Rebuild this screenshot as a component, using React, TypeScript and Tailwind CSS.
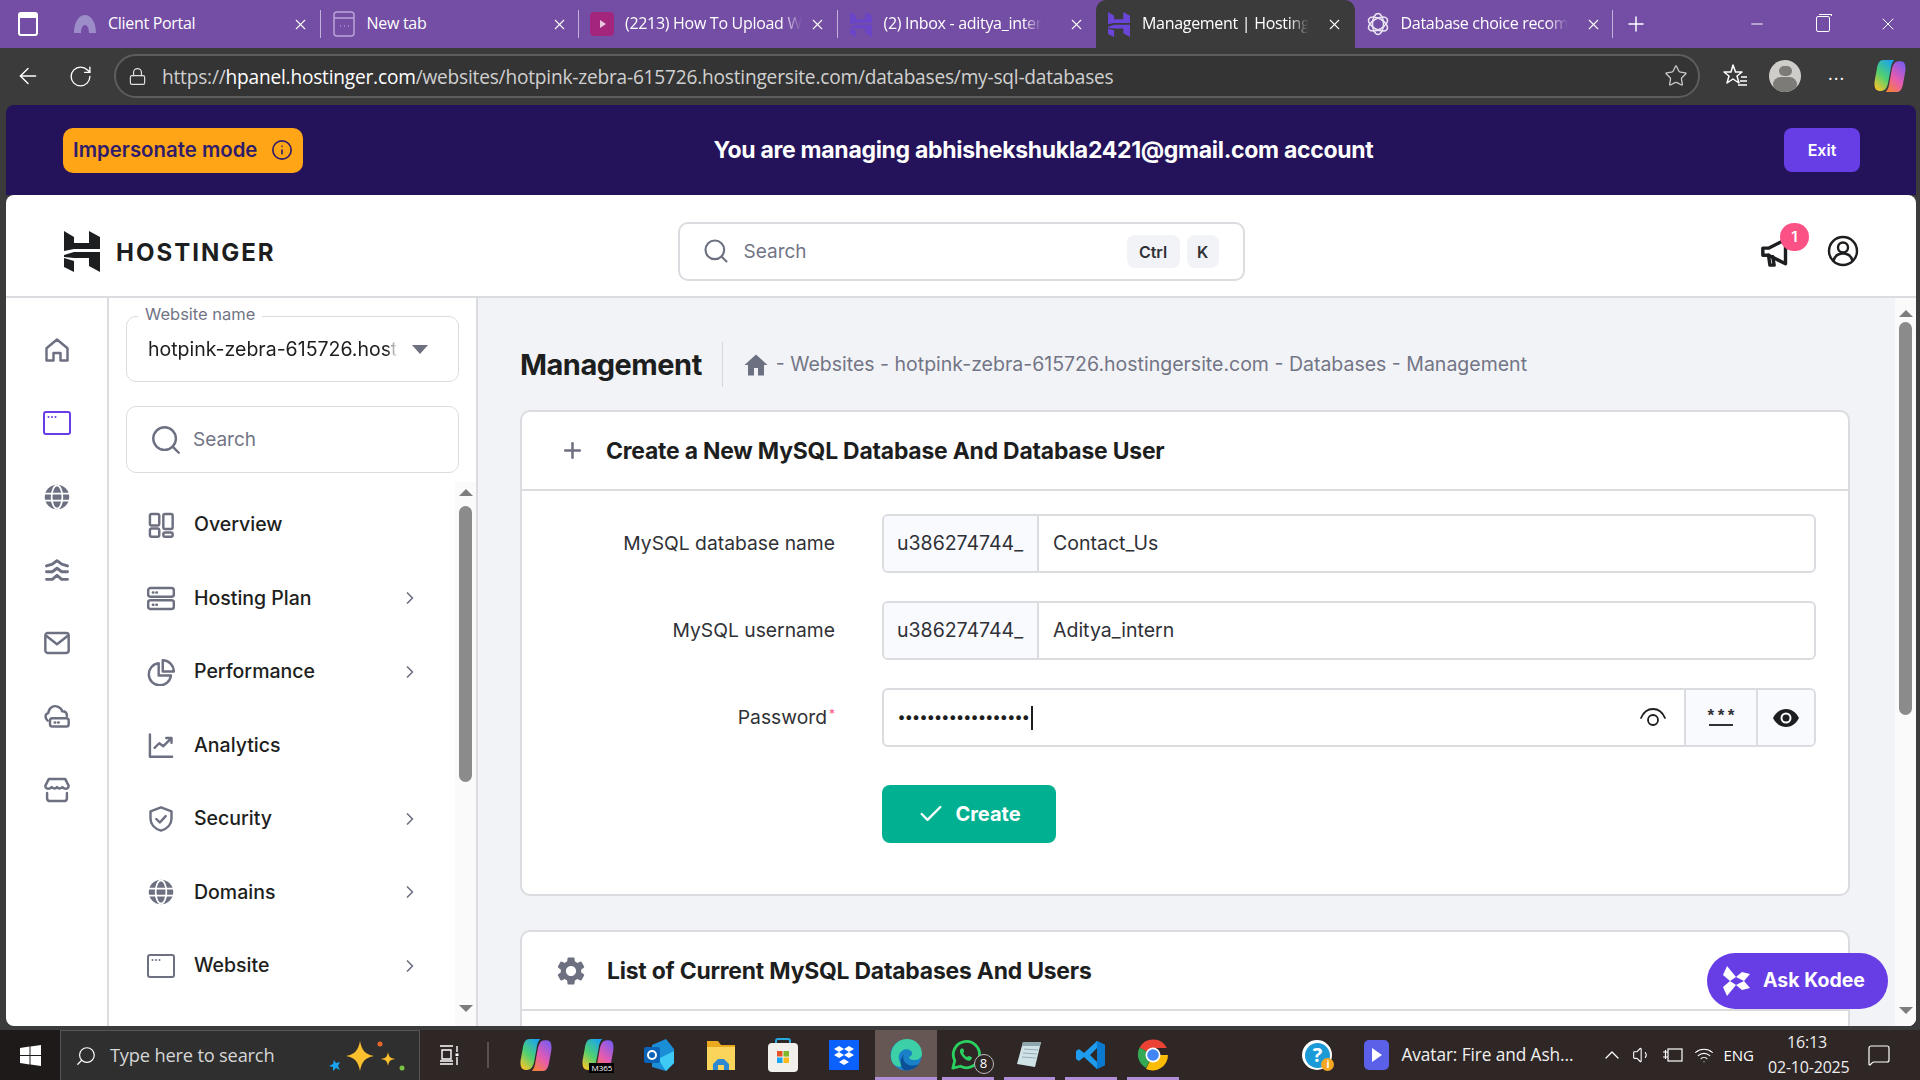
import {
  ArrowLeft,
  Check,
  ChevronRight,
  ChevronUp,
  Info,
  Lock,
  MessageSquare,
  Minus,
  Plus,
  RotateCw,
  Search,
  Star,
  Volume1,
  Wifi,
  X,
} from "lucide-react";
import { MdSettings } from "react-icons/md";

const GRAY = "#6d7081";

function HostingerLogo({ color = "#1d1e20", className = "" }: { color?: string; className?: string }) {
  return (
    <svg viewBox="0 0 36 41" className={className} fill={color}>
      <polygon points="0,0 10,6 10,12 25,12 25,0 36,6 36,18 10,18 0,20" />
      <polygon points="0,24 10,21 36,21 36,41 25,35 25,27 10,27 0,26" />
      <polygon points="0,27 10,30 10,41 0,36" />
    </svg>
  );
}

function Ico({ children, size = 28 }: { children: React.ReactNode; size?: number }) {
  return (
    <svg width={size} height={size} viewBox="0 0 24 24" fill="none" stroke={GRAY} strokeWidth="2.100" strokeLinecap="round" strokeLinejoin="round">
      {children}
    </svg>
  );
}

const HomeIco = () => (
  <Ico>
    <path d="M3 21V10.500L12 3l9 7.500V21h-6v-6.500H9V21z" />
  </Ico>
);
const WindowIco = ({ color = GRAY }: { color?: string }) => (
  <svg width="28" height="28" viewBox="0 0 28 28" fill="none">
    <rect x="1" y="3" width="26" height="22" rx="2" stroke={color} strokeWidth="2" />
    <circle cx="5.500" cy="8" r="1" fill={color} />
    <circle cx="9" cy="8" r="1" fill={color} />
    <circle cx="12.500" cy="8" r="1" fill={color} />
  </svg>
);
const GlobeIco = () => (
  <Ico>
    <circle cx="12" cy="12" r="10.500" fill={GRAY} stroke="none" />
    <g stroke="#fff" strokeWidth="1.500">
      <ellipse cx="12" cy="12" rx="4.600" ry="10" />
      <path d="M2 9h20M2 15h20" />
    </g>
  </Ico>
);
const LayersIco = () => (
  <Ico>
    <path d="M3 8.500L8 7l4-3 4 3 5 1.500" strokeWidth="2.500" />
    <path d="M3 13.500h5l4-3 4 3h5" strokeWidth="2.500" />
    <path d="M3 20h5l4-3.500 4 3.500h5" strokeWidth="2.500" />
  </Ico>
);
const MailIco = () => (
  <Ico>
    <rect x="2" y="3.500" width="20" height="17" rx="2" />
    <path d="M3 6l9 7 9-7" />
  </Ico>
);
const CloudIco = () => (
  <Ico>
    <path d="M4 16C1.500 14 1.500 10 4.500 9.500 5 5 9 2.500 12.500 4c2 .8 3.500 2 4 4 2.500 0 4 1.500 4 4" />
    <rect x="6" y="14" width="16" height="7" rx="2" />
    <path d="M10 17.500h.5M13 17.500h.5" />
  </Ico>
);
const StoreIco = () => (
  <Ico>
    <path d="M5 2.500h14l3 6c0 1.500-1.500 2.500-2.500 2.500S17 10 16.500 9.500c-.7 1-3 2-4.500 0-1.500 2-3.800 1-4.500 0C7 10 5.500 11 4.500 11S2 10 2 8.500z" />
    <path d="M3.500 14.500v4.500c0 1.500 1 2.500 2.500 2.500h12c1.500 0 2.500-1 2.500-2.500v-4.500" />
  </Ico>
);
const GridIco = () => (
  <Ico>
    <rect x="2.500" y="2.500" width="8" height="10" rx="1.500" />
    <rect x="14" y="2.500" width="8" height="13" rx="1.500" />
    <rect x="2.500" y="15" width="8" height="7" rx="1.500" />
    <rect x="14" y="18.500" width="8" height="3.500" rx="1.500" />
  </Ico>
);
const ServerIco = () => (
  <Ico>
    <rect x="1" y="3.500" width="22" height="7.500" rx="2" />
    <rect x="1" y="14" width="22" height="7.500" rx="2" />
    <path d="M5 7.200h.5M8 7.200h.5M5 17.700h.5M8 17.700h.5" />
  </Ico>
);
const PieIco = () => (
  <Ico>
    <path d="M10 4.500a9.500 9.500 0 1 0 10.500 10.500H10z" />
    <path d="M13.500 2v9.500H23A9.500 9.500 0 0 0 13.500 2z" />
  </Ico>
);
const ChartIco = () => (
  <Ico>
    <path d="M2.500 3v19h19" />
    <path d="M6.500 14.500l4-4 3.500 2.500 6.500-6.500M16.500 6h4.500v4" />
  </Ico>
);
const ShieldIco = () => (
  <Ico>
    <path d="M12 2l9 3.500v6c0 5-3.500 9-9 10.500-5.500-1.500-9-5.500-9-10.500v-6z" />
    <path d="M8 12l3 3 5-5.500" />
  </Ico>
);

// copilot ribbon, used in the toolbar and twice in the taskbar
const CopilotMark = ({ id }: { id: string }) => (
  <svg width="32" height="34" viewBox="0 0 30 32">
    <defs>
      <linearGradient id={`${id}a`} x1="0.800" y1="0" x2="0.200" y2="1">
        <stop offset="0" stopColor="#1aa3f0" />
        <stop offset="0.550" stopColor="#4fd070" />
        <stop offset="1" stopColor="#f5c52c" />
      </linearGradient>
      <linearGradient id={`${id}b`} x1="0.800" y1="0" x2="0.200" y2="1">
        <stop offset="0" stopColor="#7c5cf0" />
        <stop offset="0.550" stopColor="#e65bb0" />
        <stop offset="1" stopColor="#f6803c" />
      </linearGradient>
    </defs>
    <path d="M9 1h10c-2 2-3 5-3.500 9l-2 11c-1 6-3 9-7 9H5c-4 0-5-4-4.500-9l2-11C3.500 4 5 1 9 1z" fill={`url(#${id}a)`} />
    <path d="M21 31H11c2-2 3-5 3.500-9l2-11c1-6 3-9 7-9h1.500c4 0 5 4 4.500 9l-2 11c-1 6-2.500 9-6.500 9z" fill={`url(#${id}b)`} />
  </svg>
);

function Favicon({ kind }: { kind: string }) {
  if (kind === "portal")
    return (
      <svg width="24" height="24" viewBox="0 0 24 24">
        <path d="M1 21C1 10 6 3 12 3s11 7 11 18h-7c0-5-2-8-4-8s-4 3-4 8z" fill="#9c8cc8" />
      </svg>
    );
  if (kind === "newtab")
    return (
      <svg width="22" height="26" viewBox="0 0 22 26" fill="none" stroke="#b9a5d8" strokeWidth="1.500">
        <rect x="1" y="1" width="20" height="24" rx="3" />
        <path d="M1 7h20" />
        <path d="M7 15h.8M11 15h.8M15 15h.8" />
      </svg>
    );
  if (kind === "yt")
    return (
      <svg width="24" height="24" viewBox="0 0 24 24">
        <rect width="24" height="24" rx="4" fill="#a3267c" />
        <path d="M10 8l6 4-6 4z" fill="#e9c7df" />
      </svg>
    );
  if (kind === "gpt")
    return (
      <svg width="24" height="26" viewBox="0 0 24 24" fill="none" stroke="#e8e2f2" strokeWidth="1.500">
        <ellipse cx="12" cy="12" rx="5.500" ry="10.500" />
        <ellipse cx="12" cy="12" rx="5.500" ry="10.500" transform="rotate(60 12 12)" />
        <ellipse cx="12" cy="12" rx="5.500" ry="10.500" transform="rotate(120 12 12)" />
      </svg>
    );
  if (kind === "inbox") return <HostingerLogo color="#6a45c8" className="w-[22px] h-[25px]" />;
  return <HostingerLogo color="#6a45d8" className="w-[22px] h-[25px]" />;
}

const tabs = [
  { id: "portal", label: "Client Portal" },
  { id: "newtab", label: "New tab" },
  { id: "yt", label: "(2213) How To Upload W", fade: true },
  { id: "inbox", label: "(2) Inbox - aditya_inter", fade: true },
  { id: "active", label: "Management | Hosting", fade: true },
  { id: "gpt", label: "Database choice recom", fade: true },
];

function TabBar() {
  return (
    <div className="h-[48px] shrink-0 bg-[#744da4] flex items-center text-white font-['Open_Sans',sans-serif] text-[16px]">
      <div className="w-[62px] shrink-0 flex justify-center pr-[6px]">
        <div className="w-[20px] h-[24px] border-2 border-white rounded-[3px] border-t-[6px]" />
      </div>
      {tabs.map((t, i) => {
        const active = t.id === "active";
        const nextActive = tabs[i + 1]?.id === "active";
        return (
          <div
            key={t.id}
            className={`w-[258.500px] h-full shrink-0 flex items-center pl-[10px] ${
              active ? "bg-[#3b3b3b] rounded-t-[10px]" : ""
            }`}
          >
            <div className="w-[26px] flex justify-center shrink-0">
              <Favicon kind={t.id} />
            </div>
            <div className="ml-[10px] w-[172px] -mt-[2px] whitespace-nowrap tracking-[-0.3px]">
              <span className={t.fade ? "inline-block [mask-image:linear-gradient(to_right,black_88%,transparent)]" : "inline-block"}>{t.label}</span>
            </div>
            <X size={17} strokeWidth={1.500} className="ml-[12px] shrink-0" />
            {!active && !nextActive && t.id !== "inbox" && <div className="ml-auto w-px h-[28px] bg-[#c3b2da]" />}
          </div>
        );
      })}
      <Plus size={24} strokeWidth={1.500} className="ml-[11px] shrink-0" />
      <div className="ml-auto flex items-center">
        <Minus size={18} strokeWidth={1.300} className="mr-[50px]" />
        <div className="relative w-[14px] h-[16px] border border-white rounded-[2px] mr-[48px]">
          <div className="absolute -top-[3px] left-[2px] w-[13px] h-[2px] border-t border-r border-white" />
        </div>
        <X size={20} strokeWidth={1.200} className="mr-[22px]" />
      </div>
    </div>
  );
}

function Toolbar() {
  return (
    <div className="h-[57px] shrink-0 bg-[#3b3b3b] flex items-start pt-[6px] text-white font-['Open_Sans',sans-serif]">
      <div className="w-[114px] h-[44px] shrink-0 flex items-center pl-[15px] gap-[27px]">
        <ArrowLeft size={26} strokeWidth={1.300} />
        <RotateCw size={25} strokeWidth={1.300} />
      </div>
      <div className="w-[1586px] h-[44px] shrink-0 rounded-full border-2 border-[#5d5d5d] bg-[#343434] flex items-center pl-[12px] pr-[10px]">
        <Lock size={19} strokeWidth={1.500} className="text-[#e0e0e0]" />
        <span className="ml-[15px] mt-[2px] text-[19.100px] tracking-[-0.2px] text-[#d0d0d0]">
          https://<span className="text-white">hpanel.hostinger.com</span>/websites/hotpink-zebra-615726.hostingersite.com/databases/my-sql-databases
        </span>
        <Star size={24} strokeWidth={1.300} className="ml-auto text-[#c9c9c9]" />
      </div>
      <div className="flex-1 h-[44px] flex items-center pl-[22px]">
        <svg width="26" height="26" viewBox="0 0 26 26" fill="none" stroke="#fff" strokeWidth="1.500" strokeLinejoin="round">
          <path d="M11 2l2.500 7H20l-5 4 2 7-6-4-6 4 2-7-5-4h7z" />
          <path d="M19 14h6M18 18h7M16 22h9" />
        </svg>
        <div className="ml-[21px] w-[32px] h-[32px] rounded-full bg-[#cfcdc9] overflow-hidden relative flex flex-col items-center shrink-0">
          <div className="mt-[6px] w-[13px] h-[13px] rounded-full bg-[#7d7b78]" />
          <div className="mt-[1px] w-[24px] h-[20px] rounded-full bg-[#7d7b78]" />
        </div>
        <span className="ml-[27px] text-[18px] leading-none tracking-[1px] -mt-[6px]">...</span>
        <div className="ml-[29px] shrink-0">
          <CopilotMark id="tool" />
        </div>
      </div>
    </div>
  );
}

function Banner() {
  return (
    <div className="h-[90px] shrink-0 bg-[#24135b] rounded-t-[8px] relative flex items-center justify-between pl-[57px] pr-[56px] font-['Inter',sans-serif]">
      <div className="w-[240px] h-[45px] bg-[#ffa516] rounded-[10px] flex items-center pl-[10px] gap-[14px] text-[#2f1c6a] font-semibold text-[20.400px]">
        Impersonate mode
        <Info size={22} strokeWidth={1.800} />
      </div>
      <div className="text-white font-bold text-[23px] tracking-[-0.3px]">You are managing abhishekshukla2421@gmail.com account</div>
      <div className="w-[76px] h-[44px] bg-[#673de6] rounded-[8px] flex items-center justify-center text-white font-semibold text-[16px]">Exit</div>
    </div>
  );
}

function Header() {
  return (
    <div className="h-[103px] shrink-0 bg-white rounded-t-[8px] border-b-2 border-[#dadce0] flex items-center pl-[58px] pt-[11px] font-['Inter',sans-serif] relative">
      <HostingerLogo className="w-[36px] h-[41px]" />
      <span className="ml-[16px] mt-[3px] text-[24px] font-bold tracking-[2px] text-[#1d1e20]">HOSTINGER</span>
      <div className="ml-[402px] w-[567px] h-[59px] rounded-[10px] border-2 border-[#dadce0] flex items-center pl-[22px] pr-[24px]">
        <Search size={28} strokeWidth={1.800} color={GRAY} />
        <span className="ml-[14px] mt-[3px] text-[19px] text-[#727586]">Search</span>
        <span className="ml-auto mt-[1px] w-[53px] h-[33px] rounded-[8px] bg-[#f2f3f6] flex items-center justify-center text-[16px] font-semibold text-[#2f3136]">Ctrl</span>
        <span className="ml-[7px] mt-[1px] w-[32px] h-[33px] rounded-[8px] bg-[#f2f3f6] flex items-center justify-center text-[16px] font-semibold text-[#2f3136]">K</span>
      </div>
      <div className="ml-auto mr-[57px] flex items-center relative">
        <svg width="34" height="34" viewBox="0 0 24 24" fill="none" stroke="#1d1e20" strokeWidth="2.400" strokeLinejoin="round" strokeLinecap="round" className="ml-[2px]">
          <path d="M2 10v5h4l12 6V4L6 10z" />
          <path d="M6 15l1 7h3l-1-6" />
        </svg>
        <div className="absolute -top-[11px] left-[22px] w-[29px] h-[28px] rounded-full bg-[#fc5185] flex items-center justify-center text-white text-[15px] font-semibold">1</div>
        <svg width="32" height="32" viewBox="0 0 32 32" fill="none" stroke="#1d1e20" strokeWidth="2.400" className="ml-[33px]">
          <circle cx="16" cy="16" r="14" />
          <circle cx="16" cy="12.500" r="5" />
          <path d="M6.500 26c1-5 5-7.500 9.500-7.500s8.500 2.500 9.500 7.500" />
        </svg>
      </div>
    </div>
  );
}

function Rail() {
  return (
    <div className="w-[103px] shrink-0 border-r-2 border-[#dadce0] flex flex-col items-center pt-[38px] gap-[45.300px] pl-[1px]">
      <HomeIco />
      <WindowIco color="#673de6" />
      <GlobeIco />
      <LayersIco />
      <MailIco />
      <CloudIco />
      <StoreIco />
    </div>
  );
}

const navItems = [
  { label: "Overview", icon: <GridIco /> },
  { label: "Hosting Plan", icon: <ServerIco />, more: true },
  { label: "Performance", icon: <PieIco />, more: true },
  { label: "Analytics", icon: <ChartIco /> },
  { label: "Security", icon: <ShieldIco />, more: true },
  { label: "Domains", icon: <GlobeIco />, more: true },
  { label: "Website", icon: <WindowIco />, more: true },
];

function Sidebar() {
  return (
    <div className="w-[367px] shrink-0 relative pl-[17px] pr-[17px] pt-[18px] overflow-hidden font-['Inter',sans-serif]">
      <div className="h-[66px] rounded-[10px] border border-[#dadce0] relative flex items-center pl-[21px] pr-[30px]">
        <span className="absolute -top-[14px] left-[11px] bg-white px-[7px] text-[16.500px] leading-[22px] text-[#727586]">Website name</span>
        <span className="inline-block mt-[2px] whitespace-nowrap text-[19.500px] text-[#1d1e20] [mask-image:linear-gradient(to_right,black_96%,transparent)]">hotpink-zebra-615726.host</span>
        <div className="ml-auto w-0 h-0 border-x-[8px] border-x-transparent border-t-[9px] border-t-[#6d7081]" />
      </div>
      <div className="mt-[24px] h-[67px] rounded-[10px] border border-[#dadce0] flex items-center pl-[22px]">
        <Search size={34} strokeWidth={1.700} color={GRAY} />
        <span className="ml-[10px] mt-[2px] text-[19px] text-[#727586]">Search</span>
      </div>
      <div className="mt-[15px]">
        {navItems.map((n) => (
          <div key={n.label} className="h-[73.500px] flex items-center pl-[21px] pr-[39px]">
            <div className="w-[28px] flex justify-center shrink-0">{n.icon}</div>
            <span className="ml-[19px] text-[19.500px] font-medium text-[#1d1e20]">{n.label}</span>
            {n.more && <ChevronRight size={20} strokeWidth={2} color={GRAY} className="ml-auto" />}
          </div>
        ))}
      </div>
      <div className="absolute right-0 top-[184px] bottom-0 w-[21px] bg-[#fafafa] flex flex-col items-center">
        <div className="mt-[1px] h-[18px] flex items-center">
          <div className="w-0 h-0 border-x-[7px] border-x-transparent border-b-[7px] border-b-[#7d7d7d]" />
        </div>
        <div className="w-[13px] h-[276px] mt-[5px] rounded-full bg-[#8b8b8b]" />
        <div className="mt-auto mb-[14px] w-0 h-0 border-x-[7px] border-x-transparent border-t-[7px] border-t-[#7d7d7d]" />
      </div>
    </div>
  );
}

function FormRow({ label, required, children }: { label: string; required?: boolean; children: React.ReactNode }) {
  return (
    <div className="flex items-center h-[59px]">
      <div className="w-[313px] shrink-0 text-right text-[19.300px] text-[#2f3136]">
        {label}
        {required && <sup className="text-[#fc5185] text-[12px] ml-[2px]">*</sup>}
      </div>
      <div className="ml-[47px] w-[934px] h-full border-2 border-[#dadce0] rounded-[6px] flex items-center overflow-hidden text-[19.500px] text-[#2f3136]">
        {children}
      </div>
    </div>
  );
}

function PrefixInput({ value }: { value: string }) {
  return (
    <>
      <div className="w-[155px] h-full shrink-0 bg-[#f9fafe] border-r-2 border-[#dadce0] flex items-center pl-[13px]">u386274744_</div>
      <div className="pl-[14px]">{value}</div>
    </>
  );
}

function Content() {
  return (
    <div className="flex-1 min-w-0 bg-[#f2f3f6] border-l-2 border-[#dadce0] relative overflow-hidden font-['Inter',sans-serif] pl-[42px] pr-[66px] pt-[44px]">
      <div className="h-[45px] flex items-center">
        <h1 className="text-[29px] font-bold text-[#1d1e20] tracking-[-0.5px]">Management</h1>
        <div className="ml-[20px] w-px h-full bg-[#d5d7de]" />
        <svg width="24" height="24" viewBox="0 0 24 24" fill="#6d7081" className="ml-[21px]">
          <path d="M12 1.500L0.500 12H4v10.500h6V15h4v7.500h6V12h3.500z" />
        </svg>
        <span className="ml-[8px] text-[19.500px] text-[#727586]">- Websites - hotpink-zebra-615726.hostingersite.com - Databases - Management</span>
      </div>
      <div className="mt-[23px] h-[486px] bg-white border-2 border-[#dadce0] rounded-[10px]">
        <div className="h-[79px] border-b-2 border-[#dadce0] flex items-center pl-[38px]">
          <Plus size={25} strokeWidth={2.400} color={GRAY} />
          <span className="ml-[21px] mt-[1px] text-[22.900px] font-bold text-[#1d1e20] tracking-[-0.2px]">Create a New MySQL Database And Database User</span>
        </div>
        <div className="pt-[23px] flex flex-col gap-[28px]">
          <FormRow label="MySQL database name">
            <PrefixInput value="Contact_Us" />
          </FormRow>
          <FormRow label="MySQL username">
            <PrefixInput value="Aditya_intern" />
          </FormRow>
          <FormRow label="Password" required>
            <div className="pl-[14px] flex items-center flex-1 text-[#1d1e20]">
              <span className="text-[15px] font-bold tracking-[0.2px]">••••••••••••••••••</span>
              <span className="w-[2px] h-[24px] bg-[#1d1e20] ml-[1px]" />
              <svg width="26" height="20" viewBox="0 0 26 20" fill="none" stroke="#1d1e20" strokeWidth="1.800" strokeLinecap="round" className="ml-auto mr-[18px]">
                <path d="M1 10C4 3 9 1 13 1s9 2 12 9" />
                <circle cx="13" cy="12" r="5" />
              </svg>
            </div>
            <div className="w-[72px] h-full shrink-0 bg-[#f9fafe] border-l-2 border-[#dadce0] flex flex-col items-center justify-center">
              <span className="text-[17px] leading-[14px] font-bold tracking-[0px] text-[#2f3136] h-[10px] font-['Liberation_Mono',monospace]">***</span>
              <div className="w-[24px] h-[2px] bg-[#2f3136] mt-[4px]" />
            </div>
            <div className="w-[58px] h-full shrink-0 bg-[#f9fafe] border-l-2 border-[#dadce0] flex items-center justify-center">
              <svg width="26" height="18" viewBox="0 0 26 18">
                <path d="M0 9C3 3 8 0 13 0s10 3 13 9c-3 6-8 9-13 9S3 15 0 9z" fill="#1d1e20" />
                <circle cx="13" cy="9" r="5.500" fill="#fff" />
                <circle cx="13" cy="9" r="3.500" fill="#1d1e20" />
              </svg>
            </div>
          </FormRow>
        </div>
        <div className="ml-[360px] mt-[38px] w-[174px] h-[58px] bg-[#00b090] rounded-[8px] flex items-center justify-center gap-[10px] text-white font-bold text-[20px]">
          <Check size={28} strokeWidth={2} />
          Create
        </div>
      </div>
      <div className="mt-[34px] h-[200px] bg-white border-2 border-[#dadce0] rounded-[10px]">
        <div className="h-[79px] border-b-2 border-[#dadce0] flex items-center pl-[32px]">
          <MdSettings size={34} color={GRAY} />
          <span className="ml-[19px] mt-[1px] text-[22.900px] font-bold text-[#1d1e20] tracking-[-0.2px]">List of Current MySQL Databases And Users</span>
        </div>
      </div>
      <div className="absolute right-[28px] bottom-[17px] w-[181px] h-[56px] rounded-full bg-[#673de6] flex items-center pl-[16px] gap-[12px] text-white font-bold text-[19.500px]">
        <svg width="28" height="30" viewBox="0 0 28 30" fill="#fff">
          <polygon points="4,0 13,11 7,15 0,9" />
          <polygon points="4,30 13,19 7,15 0,21" />
          <polygon points="13,11 19,6 27,8 21,15" />
          <polygon points="13,19 19,24 27,22 21,15" />
        </svg>
        Ask Kodee
      </div>
      <div className="absolute right-0 top-0 bottom-0 w-[21px] bg-[#fafafa] flex flex-col items-center">
        <div className="mt-[12px] w-0 h-0 border-x-[7px] border-x-transparent border-b-[7px] border-b-[#7d7d7d]" />
        <div className="mt-[5px] w-[13px] h-[393px] rounded-full bg-[#8b8b8b]" />
        <div className="mt-auto mb-[12px] w-0 h-0 border-x-[7px] border-x-transparent border-t-[7px] border-t-[#7d7d7d]" />
      </div>
    </div>
  );
}

function TaskIcon({ children, active, bar, badge }: { children: React.ReactNode; active?: boolean; bar?: boolean; badge?: string }) {
  return (
    <div className={`relative w-[61.700px] h-full flex items-center justify-center shrink-0 ${active ? "bg-[#665654]" : ""}`}>
      {children}
      {badge && (
        <div className="absolute right-[5px] bottom-[6px] w-[20px] h-[20px] rounded-full border border-[#bbb] bg-[#2f2626] flex items-center justify-center text-white text-[13px]">{badge}</div>
      )}
      {bar && <div className={`absolute bottom-0 h-[3px] bg-[#b08fd8] ${active ? "inset-x-0" : "inset-x-[5px]"}`} />}
    </div>
  );
}

function Taskbar() {
  return (
    <div className="h-[50px] shrink-0 bg-[#2f2626] flex items-center text-white font-['Open_Sans',sans-serif]">
      <div className="w-[60px] h-full shrink-0 bg-[#1f1a1a] flex items-center justify-center">
        <svg width="21" height="21" viewBox="0 0 21 21" fill="#fff">
          <polygon points="0,3 9.500,1.600 9.500,10 0,10" />
          <polygon points="10.500,1.400 21,0 21,10 10.500,10" />
          <polygon points="0,11 9.500,11 9.500,19.400 0,18" />
          <polygon points="10.500,11 21,11 21,21 10.500,19.600" />
        </svg>
      </div>
      <div className="w-[360px] h-full shrink-0 bg-[#2f2f2f] border border-[#565656] border-b-0 flex items-center pl-[14px] relative">
        <Search size={22} strokeWidth={1.300} className="-scale-x-100" />
        <span className="ml-[13px] -mt-[2px] text-[18.300px] text-[#d6d6d6] tracking-[-0.2px]">Type here to search</span>
        <svg width="78" height="36" viewBox="0 0 78 36" className="ml-auto mr-[13px]">
          <path d="M32 3c2 10 5 13 14 15-9 2-12 5-14 15-2-10-5-13-14-15 9-2 12-5 14-15z" fill="#f9bf2c" />
          <path d="M60 14c1 5 2 6 7 7-5 1-6 2-7 7-1-5-2-6-7-7 5-1 6-2 7-7z" fill="#f9bf2c" />
          <path d="M6 22l2 3 4-1-2 4 2 4-4-2-3 3 0-4-4-1 4-2z" fill="#1aa3f0" />
          <circle cx="52" cy="6" r="2.500" fill="#e8662a" />
          <circle cx="74" cy="30" r="2.500" fill="#7cc242" />
        </svg>
      </div>
      <div className="w-[67px] pr-[10px] flex justify-center shrink-0">
        <svg width="20" height="20" viewBox="0 0 20 20" fill="none" stroke="#fff" strokeWidth="1.400">
          <path d="M1 1h13M1 19h13M3 5h9v9H3zM1 16h13M18 1v6M18 12v8" />
          <rect x="16.500" y="8.500" width="3" height="2.500" fill="#fff" stroke="none" />
        </svg>
      </div>
      <div className="w-[2px] h-[26px] border-x border-[#5b5050] shrink-0" />
      <div className="h-full flex items-center pl-[16px]">
        <TaskIcon>
          <CopilotMark id="ta" />
        </TaskIcon>
        <TaskIcon>
          <CopilotMark id="tb" />
          <span className="absolute bottom-[7px] right-[14px] bg-black text-white text-[8px] leading-[10px] px-[2px]">M365</span>
        </TaskIcon>
        <TaskIcon>
          <svg width="30" height="32" viewBox="0 0 30 32">
            <path d="M8 6l14-6 8 10v14l-8 8-14-4z" fill="#1a8fd8" />
            <path d="M14 20l16-8v12l-8 8z" fill="#3fcaf5" />
            <rect x="0" y="8" width="16" height="16" rx="2" fill="#0b64b8" />
            <circle cx="8" cy="16" r="4" fill="none" stroke="#fff" strokeWidth="2" />
          </svg>
        </TaskIcon>
        <TaskIcon>
          <svg width="28" height="30" viewBox="0 0 28 30">
            <path d="M0 1h11l3 4h14v25H0z" fill="#e8a91e" />
            <rect x="0" y="7" width="28" height="23" fill="#fbd45c" />
            <path d="M6 30v-6l5-5h6l5 5v6h-5v-5h-6v5z" fill="#2d8ad2" />
          </svg>
        </TaskIcon>
        <TaskIcon>
          <svg width="30" height="34" viewBox="0 0 30 34">
            <path d="M8 8V3a2 2 0 0 1 2-2h10a2 2 0 0 1 2 2v5" fill="none" stroke="#2aa7dc" strokeWidth="2" />
            <rect x="0" y="5" width="30" height="29" rx="4" fill="#f2f0ec" />
            <rect x="9" y="13" width="5.500" height="5.500" fill="#e8542a" />
            <rect x="15.500" y="13" width="5.500" height="5.500" fill="#7cb82a" />
            <rect x="9" y="19.500" width="5.500" height="5.500" fill="#1aa3f0" />
            <rect x="15.500" y="19.500" width="5.500" height="5.500" fill="#fbbc1a" />
          </svg>
        </TaskIcon>
        <TaskIcon>
          <svg width="30" height="30" viewBox="0 0 30 30">
            <rect width="30" height="30" fill="#0a61fe" />
            <path d="M10 6l5 3-5 3-5-3zM20 6l5 3-5 3-5-3zM10 12l5 3-5 3-5-3zM20 12l5 3-5 3-5-3zM15 19l5 3-5 3-5-3z" fill="#fff" />
          </svg>
        </TaskIcon>
        <TaskIcon active bar>
          <svg width="32" height="32" viewBox="0 0 32 32">
            <circle cx="16" cy="16" r="15.500" fill="#1a80c8" />
            <path d="M1 15C2 6 9 0 17 0c8 0 15 6 15 15 0 4-4 6-8 6-3 0-5-1-5-3 3-1 4-4 2-6-3-3-10-2-12 4-1 4 1 8 4 11C6 30 0 24 1 15z" fill="#3dd0a8" />
            <path d="M14 31c5 1 12-1 15-6-4 2-9 2-12 0-3-2-5-6-3-10-4 4-5 12 0 16z" fill="#0c4f96" />
          </svg>
        </TaskIcon>
        <TaskIcon bar badge="8">
          <svg width="30" height="32" viewBox="0 0 32 32" className="-ml-[3px]">
            <path d="M2 30l2-8A14 14 0 1 1 10 28z" fill="none" stroke="#2bd160" strokeWidth="3" strokeLinejoin="round" />
            <path d="M11 9c-2 1-2 4 0 7 2 3 5 6 8 6 2 0 4-2 3-4l-3-1-2 1c-1-.5-3-2-4-4l1-2-1-3z" fill="#2bd160" />
          </svg>
        </TaskIcon>
        <TaskIcon bar>
          <svg width="28" height="30" viewBox="0 0 28 30">
            <path d="M8 2h18l-6 25-18-3z" fill="#cfe3e6" />
            <path d="M8 2h18l-1 4H7z" fill="#8fa6ad" />
            <path d="M9 9l14 1M8 13l14 1M7 17l14 1" stroke="#9ab" strokeWidth="1" />
          </svg>
        </TaskIcon>
        <TaskIcon bar>
          <svg width="30" height="30" viewBox="0 0 30 30">
            <path d="M21 1l8 4v20l-8 4L8 17 3 21l-3-2V11l3-2 5 4z" fill="#1f9cf0" />
            <path d="M21 8l-7 7 7 7z" fill="#2f2626" />
            <path d="M21 1l8 4v20l-8 4z" fill="#0a7ad0" />
          </svg>
        </TaskIcon>
        <TaskIcon bar>
          <svg width="32" height="32" viewBox="0 0 32 32">
            <path d="M16 16L2.500 8.500A15.500 15.500 0 0 1 30 9H16z" fill="#ea4335" />
            <path d="M16 16L9 29A15.500 15.500 0 0 1 2.500 8.500z" fill="#34a853" />
            <path d="M16 16h15a15.500 15.500 0 0 1-22 14z" fill="#fbbc05" />
            <circle cx="16" cy="16" r="7.500" fill="#fff" />
            <circle cx="16" cy="16" r="5.800" fill="#4285f4" />
          </svg>
        </TaskIcon>
      </div>
      <div className="ml-auto flex items-center h-full">
        <div className="w-[30px] h-[30px] rounded-full bg-white flex items-center justify-center relative">
          <div className="w-[25px] h-[25px] rounded-full bg-[#1a9ad6] flex items-center justify-center text-white text-[20px] font-bold leading-none">?</div>
          <div className="absolute -right-[2px] -bottom-[1px] w-[13px] h-[13px] rounded-full bg-[#f5a623] flex items-center justify-center text-white text-[10px] font-bold">i</div>
        </div>
        <div className="ml-[32px] w-[25px] h-[30px] rounded-[5px] bg-[#5a60e8] flex items-center justify-center">
          <div className="w-0 h-0 border-y-[7px] border-y-transparent border-l-[10px] border-l-white" />
        </div>
        <span className="ml-[12px] w-[187px] text-[17.300px] text-[#f0f0f0] tracking-[-0.1px] whitespace-nowrap">Avatar: Fire and Ash...</span>
        <ChevronUp size={24} strokeWidth={1.300} className="ml-[12px]" />
        <Volume1 size={20} strokeWidth={1.300} className="ml-[8px]" />
        <svg width="20" height="14" viewBox="0 0 20 14" fill="none" stroke="#fff" strokeWidth="1.200" className="ml-[11px]">
          <rect x="5" y="1" width="14" height="12" />
          <path d="M0 4h5M0 9h5M2.500 2v9" />
        </svg>
        <Wifi size={20} strokeWidth={1.300} className="ml-[11px]" />
        <span className="ml-[9px] text-[15px]">ENG</span>
        <div className="ml-[14px] w-[78px] text-center text-[16px] leading-[25px] tracking-[-0.2px] text-[#eee]">
          <div>16:13</div>
          <div className="whitespace-nowrap">02-10-2025</div>
        </div>
        <MessageSquare size={24} strokeWidth={1.200} className="ml-[21px] mr-[29px]" />
      </div>
    </div>
  );
}

export default function App() {
  return (
    <div className="w-[1920px] h-[1080px] overflow-hidden flex flex-col bg-[#3b3b3b]">
      <TabBar />
      <Toolbar />
      <div className="flex-1 min-h-0 flex flex-col pl-[6px] pr-[4px]">
        <Banner />
        <Header />
        <div className="flex-1 min-h-0 bg-white rounded-b-[8px] flex overflow-hidden">
          <Rail />
          <Sidebar />
          <Content />
        </div>
        <div className="h-[4px] shrink-0" />
      </div>
      <Taskbar />
    </div>
  );
}
